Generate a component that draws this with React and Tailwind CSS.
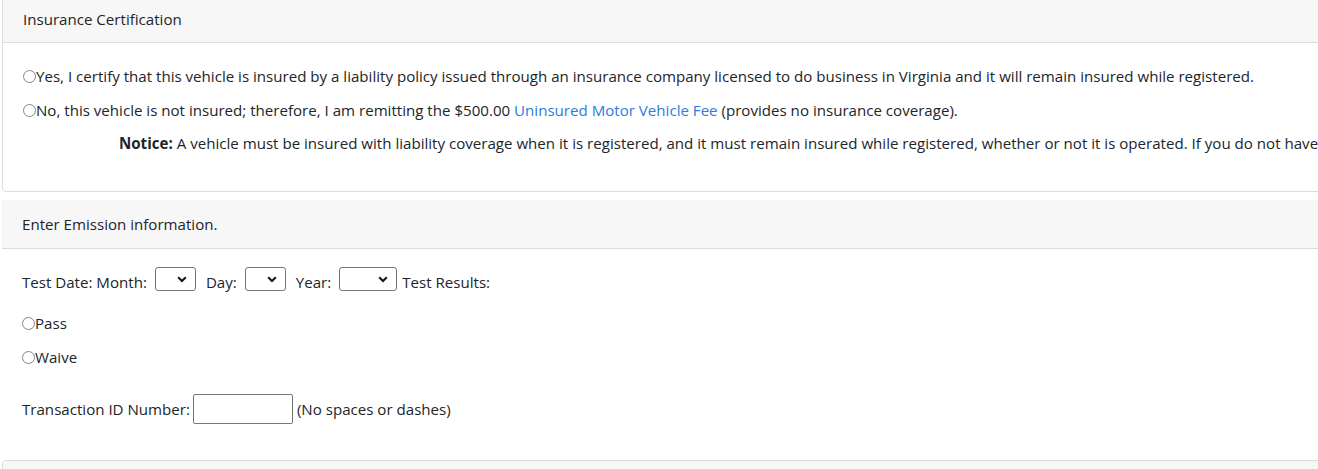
export default function App() {
  const Radio = () => (
    <span className="inline-block w-[13px] h-[13px] rounded-full border border-[#858585] bg-white shrink-0" />
  );
  const Select = ({ w }) => (
    <span
      className="relative inline-flex items-center h-[24px] border border-[#767676] rounded-[3px] bg-white"
      style={{ width: w }}
    >
      <svg className="absolute right-[8px] top-[8px]" width="10" height="7" viewBox="0 0 10 7">
        <path d="M1.2 1.2 L5 5 L8.8 1.2" fill="none" stroke="#111" strokeWidth="2" />
      </svg>
    </span>
  );
  return (
    <div
      className="w-[1318px] h-[469px] overflow-hidden bg-white text-[15.1px] text-[#212529]"
      style={{ fontFamily: "'Open Sans', sans-serif" }}
    >
      <div className="ml-[2px] mt-[-6px] w-[1500px] border border-[#dcdcdc] rounded-[4px]">
        <div className="h-[48px] flex items-center px-5 bg-[#f7f7f7] border-b border-[#dcdcdc] pt-[1px]">
          Insurance Certification
        </div>
        <div className="pt-[21px] pb-[36px] px-5">
          <div className="h-[24px] flex items-center">
            <Radio />
            <span>Yes, I certify that this vehicle is insured by a liability policy issued through an insurance company licensed to do business in Virginia and it will remain insured while registered.</span>
          </div>
          <div className="h-[24px] flex items-center mt-[10px]">
            <Radio />
            <span>
              No, this vehicle is not insured; therefore, I am remitting the $500.00{" "}
              <a className="text-[#2b7be0]">Uninsured Motor Vehicle Fee</a> (provides no insurance coverage).
            </span>
          </div>
          <div className="h-[24px] flex items-center mt-[9px] pl-[96px] whitespace-nowrap">
            <span>
              <b className="font-bold">Notice:</b> A vehicle must be insured with liability coverage when it is registered, and it must remain insured while registered, whether or not it is operated. If you do not have insurance coverage you must pay the fee.
            </span>
          </div>
        </div>
      </div>

      <div className="ml-[2px] mt-2 w-[1500px]">
        <div className="h-[49px] flex items-center px-5 bg-[#f7f7f7] border-b border-[#dcdcdc]">
          Enter Emission information.
        </div>
        <div className="px-5 pt-[20px] pb-[29px]">
          <div className="h-[26px] flex items-center">
            <span>Test Date: Month:</span>
            <span className="ml-[8px]"><Select w={41} /></span>
            <span className="ml-[10px]">Day:</span>
            <span className="ml-[8px]"><Select w={41} /></span>
            <span className="ml-[10px]">Year:</span>
            <span className="ml-[8px]"><Select w={58} /></span>
            <span className="ml-[5px]">Test Results:</span>
          </div>
          <div className="h-[24px] flex items-center mt-[16px]">
            <Radio />
            <span>Pass</span>
          </div>
          <div className="h-[24px] flex items-center mt-[10px]">
            <Radio />
            <span>Waive</span>
          </div>
          <div className="h-[30px] flex items-center mt-[25px]">
            <span>Transaction ID Number:</span>
            <span className="ml-[3px] inline-block w-[100px] h-[30px] border border-[#767676] rounded-[2px] bg-white" />
            <span className="ml-[4px]">(No spaces or dashes)</span>
          </div>
        </div>
      </div>

      <div className="ml-[2px] mt-[7px] w-[1500px] border border-[#dcdcdc] rounded-[4px]">
        <div className="h-[48px] bg-[#f7f7f7] rounded-t-[4px]" />
      </div>
    </div>
  );
}
